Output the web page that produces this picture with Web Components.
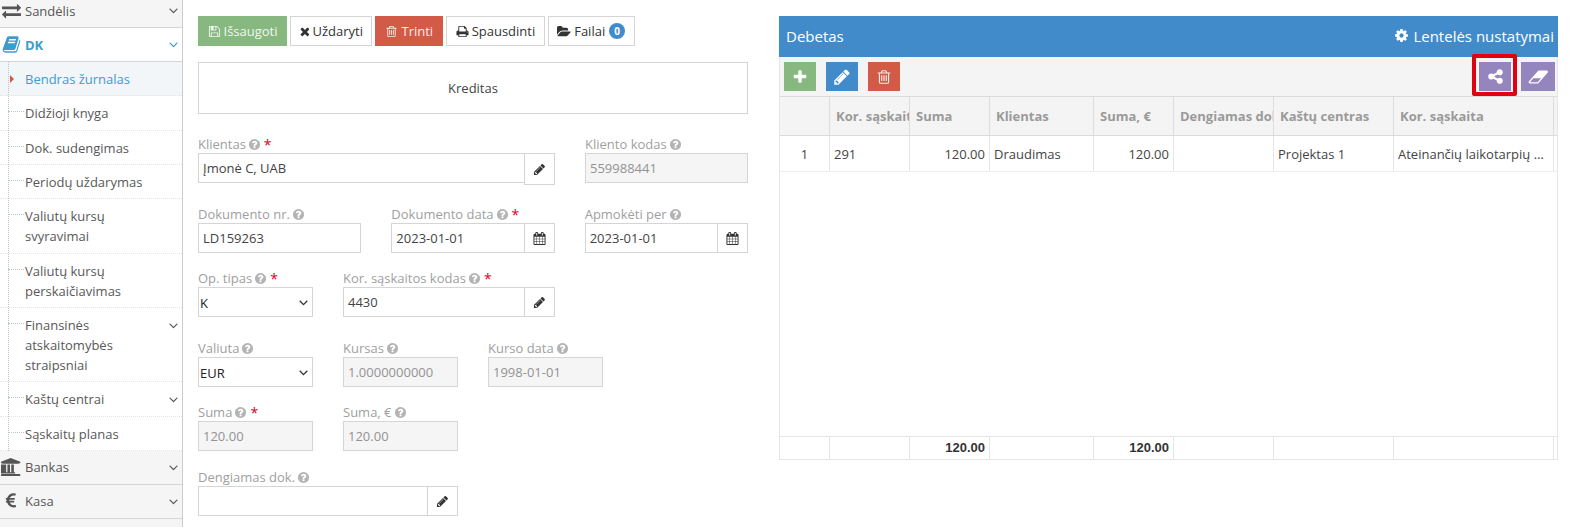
<!DOCTYPE html>
<html lang="lt">
<head>
<meta charset="utf-8">
<title>Bendras žurnalas</title>
<style>
  html, body { margin: 0; height: 527px; overflow: hidden; background: #fff; }
  body { font: 13px/20px "Open Sans", sans-serif; color: #444; }
</style>
</head>
<body>
<app-shell>
  <side-nav slot="nav">
    <nav-group icon="exchange" label="Sandėlis"></nav-group>
    <nav-group icon="book" label="DK" open></nav-group>
    <nav-sub>
      <nav-item active>Bendras žurnalas</nav-item>
      <nav-item>Didžioji knyga</nav-item>
      <nav-item>Dok. sudengimas</nav-item>
      <nav-item>Periodų uždarymas</nav-item>
      <nav-item>Valiutų kursų svyravimai</nav-item>
      <nav-item>Valiutų kursų perskaičiavimas</nav-item>
      <nav-item chevron>Finansinės atskaitomybės straipsniai</nav-item>
      <nav-item chevron>Kaštų centrai</nav-item>
      <nav-item>Sąskaitų planas</nav-item>
    </nav-sub>
    <nav-group icon="bank" label="Bankas"></nav-group>
    <nav-group icon="eur" label="Kasa"></nav-group>
    <nav-group></nav-group>
  </side-nav>

  <doc-form slot="form">
    <action-bar>
      <action-btn kind="success" icon="save">Išsaugoti</action-btn>
      <action-btn icon="times">Uždaryti</action-btn>
      <action-btn kind="danger" icon="trash">Trinti</action-btn>
      <action-btn icon="print">Spausdinti</action-btn>
      <action-btn icon="folder" badge="0">Failai</action-btn>
    </action-bar>
    <side-title>Kreditas</side-title>
    <form-row style="margin-top:21px">
      <form-field style="width:357px" label="Klientas" required value="Įmonė C, UAB" addon="pencil" tall></form-field>
      <form-field style="width:163px" label="Kliento kodas" value="559988441" readonly></form-field>
    </form-row>
    <form-row style="margin-top:22px">
      <form-field style="width:163.33px" label="Dokumento nr." value="LD159263"></form-field>
      <form-field style="width:163.33px" label="Dokumento data" required value="2023-01-01" addon="calendar"></form-field>
      <form-field style="width:163.33px" label="Apmokėti per" value="2023-01-01" addon="calendar"></form-field>
    </form-row>
    <form-row style="margin-top:16px">
      <form-field style="width:115px" label="Op. tipas" required options="K"></form-field>
      <form-field style="width:212px" label="Kor. sąskaitos kodas" required value="4430" addon="pencil"></form-field>
    </form-row>
    <form-row style="margin-top:22px">
      <form-field style="width:115px" label="Valiuta" options="EUR"></form-field>
      <form-field style="width:115px" label="Kursas" value="1.0000000000" readonly></form-field>
      <form-field style="width:115px" label="Kurso data" value="1998-01-01" readonly></form-field>
    </form-row>
    <form-row style="margin-top:16px">
      <form-field style="width:115px" label="Suma" required value="120.00" readonly></form-field>
      <form-field style="width:115px" label="Suma, €" value="120.00" readonly></form-field>
    </form-row>
    <form-row style="margin-top:17px">
      <form-field style="width:260px" label="Dengiamas dok." value="" addon="pencil"></form-field>
    </form-row>
  </doc-form>

  <data-panel slot="panel" title="Debetas"></data-panel>
</app-shell>

<script>
const ICONS = {
  save: ['0 0 1792 1792', 'M512 1536h768v-384h-768v384zm896 0h128v-896q0-14-10-38.5t-20-34.5l-281-281q-10-10-34-20t-39-10v416q0 40-28 68t-68 28h-576q-40 0-68-28t-28-68v-416h-128v1280h128v-416q0-40 28-68t68-28h832q40 0 68 28t28 68v416zm-384-928v-320q0-13-9.5-22.5t-22.5-9.5h-192q-13 0-22.5 9.5t-9.5 22.5v320q0 13 9.5 22.5t22.5 9.5h192q13 0 22.5-9.5t9.5-22.5zm640 32v928q0 40-28 68t-68 28h-1344q-40 0-68-28t-28-68v-1344q0-40 28-68t68-28h928q40 0 88 20t76 48l280 280q28 28 48 76t20 88z'],
  times: ['216 0 1376 1792', 'M1490 1322q0 40-28 68l-136 136q-28 28-68 28t-68-28l-294-294-294 294q-28 28-68 28t-68-28l-136-136q-28-28-28-68t28-68l294-294-294-294q-28-28-28-68t28-68l136-136q28-28 68-28t68 28l294 294 294-294q28-28 68-28t68 28l136 136q28 28 28 68t-28 68l-294 294 294 294q28 28 28 68z'],
  trash: ['0 0 1792 1792', 'M704 736v576q0 14-9 23t-23 9h-64q-14 0-23-9t-9-23v-576q0-14 9-23t23-9h64q14 0 23 9t9 23zm256 0v576q0 14-9 23t-23 9h-64q-14 0-23-9t-9-23v-576q0-14 9-23t23-9h64q14 0 23 9t9 23zm256 0v576q0 14-9 23t-23 9h-64q-14 0-23-9t-9-23v-576q0-14 9-23t23-9h64q14 0 23 9t9 23zm128 724v-948h-896v948q0 22 7 40.5t14.5 27 10.5 8.5h832q3 0 10.5-8.5t14.5-27 7-40.5zm-672-1076h448l-48-117q-7-9-17-11h-317q-10 2-17 11zm928 32v64q0 14-9 23t-23 9h-96v948q0 83-47 143.5t-113 60.5h-832q-66 0-113-58.5t-47-141.5v-952h-96q-14 0-23-9t-9-23v-64q0-14 9-23t23-9h309l70-167q15-37 54-63t79-26h320q40 0 79 26t54 63l70 167h309q14 0 23 9t9 23z'],
  print: ['0 0 1792 1792', 'M448 1536h896v-256h-896v256zm0-640h896v-384h-160q-40 0-68-28t-28-68v-160h-640v640zm1152 64q0-26-19-45t-45-19-45 19-19 45 19 45 45 19 45-19 19-45zm128 0v416q0 13-9.5 22.5t-22.5 9.5h-224v160q0 40-28 68t-68 28h-960q-40 0-68-28t-28-68v-160h-224q-13 0-22.5-9.5t-9.5-22.5v-416q0-79 56.5-135.5t135.5-56.5h64v-544q0-40 28-68t68-28h672q40 0 88 20t76 48l152 152q28 28 48 76t20 88v256h64q79 0 135.5 56.5t56.5 135.5z'],
  folder: ['0 0 1920 1792', 'M1879 952q0 31-31 66l-336 396q-43 51-120.5 86.5t-143.5 35.5h-1088q-34 0-60.5-13t-26.5-43q0-31 31-66l336-396q43-51 120.5-86.5t143.5-35.5h1088q34 0 60.5 13t26.5 43zm-343-344v160h-832q-94 0-197 47.5t-164 119.5l-337 396-5 6q0-4-.5-12.5t-.5-12.5v-960q0-92 66-158t158-66h320q92 0 158 66t66 158v32h544q92 0 158 66t66 158z'],
  help: ['0 0 1792 1792', 'M1024 1376v-192q0-14-9-23t-23-9h-192q-14 0-23 9t-9 23v192q0 14 9 23t23 9h192q14 0 23-9t9-23zm256-672q0-88-55.5-163t-138.5-116-170-41q-243 0-371 213-15 24 8 42l132 100q7 6 19 6 16 0 25-12 53-68 86-92 34-24 86-24 48 0 85.5 26t37.5 59q0 38-20 61t-68 45q-63 28-115.5 86.5t-52.5 125.5v36q0 14 9 23t23 9h192q14 0 23-9t9-23q0-19 21.5-49.5t54.5-49.5q32-18 49-28.5t46-35 44.5-48 28-60.5 12.5-81zm384 192q0 209-103 385.5t-279.5 279.5-385.5 103-385.5-103-279.5-279.5-103-385.5 103-385.5 279.5-279.5 385.5-103 385.5 103 279.5 279.5 103 385.5z'],
  pencil: ['0 0 1792 1792', 'M491 1536l91-91-235-235-91 91v107h128v128h107zm523-928q0-22-22-22-10 0-17 7l-542 542q-7 7-7 17 0 22 22 22 10 0 17-7l542-542q7-7 7-17zm-54-192l416 416-832 832h-416v-416zm683 96q0 53-37 90l-166 166-416-416 166-165q36-38 90-38 53 0 91 38l235 234q37 39 37 91z'],
  calendar: ['0 0 1792 1792', 'M192 1664h288v-288h-288v288zm352 0h320v-288h-320v288zm-352-352h288v-320h-288v320zm352 0h320v-320h-320v320zm-352-384h288v-288h-288v288zm736 736h320v-288h-320v288zm-384-736h320v-288h-320v288zm768 736h288v-288h-288v288zm-384-352h320v-320h-320v320zm-352-864v-288q0-13-9.5-22.5t-22.5-9.5h-64q-13 0-22.5 9.5t-9.5 22.5v288q0 13 9.5 22.5t22.5 9.5h64q13 0 22.5-9.5t9.5-22.5zm736 864h288v-320h-288v320zm-384-384h320v-288h-320v288zm384 0h288v-288h-288v288zm32-480v-288q0-13-9.5-22.5t-22.5-9.5h-64q-13 0-22.5 9.5t-9.5 22.5v288q0 13 9.5 22.5t22.5 9.5h64q13 0 22.5-9.5t9.5-22.5zm384-64v1280q0 52-38 90t-90 38h-1408q-52 0-90-38t-38-90v-1280q0-52 38-90t90-38h128v-96q0-66 47-113t113-47h64q66 0 113 47t47 113v96h384v-96q0-66 47-113t113-47h64q66 0 113 47t47 113v96h128q52 0 90 38t38 90z'],
  plus: ['0 0 1792 1792', 'M1600 736v192q0 40-28 68t-68 28h-416v416q0 40-28 68t-68 28h-192q-40 0-68-28t-28-68v-416h-416q-40 0-68-28t-28-68v-192q0-40 28-68t68-28h416v-416q0-40 28-68t68-28h192q40 0 68 28t28 68v416h416q40 0 68 28t28 68z'],
  cog: ['0 0 1792 1792', 'M1152 896q0-106-75-181t-181-75-181 75-75 181 75 181 181 75 181-75 75-181zm512-109v222q0 12-8 23t-20 13l-185 28q-19 54-39 91 35 50 107 138 10 12 10 25t-9 23q-27 37-99 108t-94 71q-12 0-26-9l-138-108q-44 23-91 38-16 136-29 186-7 28-36 28h-222q-14 0-24.5-8.5t-11.5-21.5l-28-184q-49-16-90-37l-141 107q-10 9-25 9-14 0-25-11-126-114-165-168-7-10-7-23 0-12 8-23 15-21 51-66.5t54-70.5q-27-50-41-99l-183-27q-13-2-21-12.5t-8-23.5v-222q0-12 8-23t19-13l186-28q14-46 39-92-40-57-107-138-10-12-10-24 0-10 9-23 26-36 98.5-107.5t94.5-71.5q13 0 26 10l138 107q44-23 91-38 16-136 29-186 7-28 36-28h222q14 0 24.5 8.5t11.5 21.5l28 184q49 16 90 37l142-107q9-9 24-9 13 0 25 10 129 119 165 170 7 8 7 22 0 12-8 23-15 21-51 66.5t-54 70.5q26 50 41 98l183 28q13 2 21 12.5t8 23.5z'],
  share: ['0 0 1792 1792', 'M1344 1024q133 0 226.5 93.5t93.5 226.5-93.5 226.5-226.5 93.5-226.5-93.5-93.5-226.5q0-12 2-34l-360-180q-92 86-218 86-133 0-226.5-93.5t-93.5-226.5 93.5-226.5 226.5-93.5q126 0 218 86l360-180q-2-22-2-34 0-133 93.5-226.5t226.5-93.5 226.5 93.5 93.5 226.5-93.5 226.5-226.5 93.5q-126 0-218-86l-360 180q2 22 2 34t-2 34l360 180q92-86 218-86z'],
  eraser: ['0 0 2048 1792', 'M960 1408l336-384h-768l-336 384h768zm1013-1077q15 34 9.5 71.5t-30.5 65.5l-896 1024q-38 44-96 44h-768q-38 0-69.5-20.5t-47.5-54.5q-15-34-9.5-71.5t30.5-65.5l896-1024q38-44 96-44h768q38 0 70 20.5t47 54.5z'],
  exchange: ['0 0 1792 1792', 'M1792 1184v192q0 13-9.5 22.5t-22.5 9.5h-1376v192q0 13-9.5 22.5t-22.5 9.5q-12 0-24-10l-319-320q-9-9-9-22 0-14 9-23l320-320q9-9 23-9 13 0 22.5 9.5t9.5 22.5v192h1376q13 0 22.5 9.5t9.5 22.5zm0-544q0 14-9 23l-320 320q-9 9-23 9-13 0-22.5-9.5t-9.5-22.5v-192h-1376q-13 0-22.5-9.5t-9.5-22.5v-192q0-13 9.5-22.5t22.5-9.5h1376v-192q0-14 9-23t23-9q12 0 24 10l319 319q9 9 9 23z'],
  book: ['0 0 1792 1792', 'M1703 478q40 57 18 129l-275 906q-19 64-76.5 107.5t-122.5 43.5h-923q-77 0-148.5-53.5t-99.5-131.5q-24-67-2-127 0-4 3-27t4-37q1-8-3-21.5t-3-19.5q2-11 8-21t16.5-23.5 16.5-23.5q23-38 45-91.5t30-91.5q3-10 .5-30t-.5-28q3-11 17-28t17-23q21-36 42-92t25-90q1-9-2.5-32t.5-28q4-13 22-30.5t22-22.5q19-26 42.5-84.5t27.5-96.5q1-8-3-25.5t-2-26.5q2-8 9-18t18-23 17-21q8-12 16.5-30.5t15-35 16-36 19.5-32 26.5-23.5 36-11.5 47.5 5.5l-1 3q38-9 51-9h761q74 0 114 56t18 130l-274 906q-36 119-71.5 153.5t-128.5 34.5h-869q-27 0-38 15-11 16-1 43 24 70 144 70h923q29 0 56-15.5t35-41.5l300-987q7-22 5-57 38 15 59 43zm-1064 2q-4 13 2 22.5t20 9.5h608q13 0 25.5-9.5t16.5-22.5l21-64q4-13-2-22.5t-20-9.5h-608q-13 0-25.5 9.5t-16.5 22.5zm-83 256q-4 13 2 22.5t20 9.5h608q13 0 25.5-9.5t16.5-22.5l21-64q4-13-2-22.5t-20-9.5h-608q-13 0-25.5 9.5t-16.5 22.5z'],
  bank: ['0 0 1920 1792', 'M960 0l960 384v128h-128q0 26-20.5 45t-48.5 19h-1526q-28 0-48.5-19t-20.5-45h-128v-128zm-704 640h256v768h128v-768h256v768h128v-768h256v768h59q28 0 48.5 19t20.5 45v64h-1664v-64q0-26 20.5-45t48.5-19h59v-768zm1595 960q28 0 48.5 19t20.5 45v128h-1920v-128q0-26 20.5-45t48.5-19h1782z'],
  eur: ['0 0 1792 1792', 'M1360 1307l35 159q3 12-3 22.5t-17 14.5l-5 1q-4 2-10.5 3.5t-16 4.5-21.5 5-25.5 5-30 5-33.5 4.5-36.5 3-38.5 1q-234 0-409-130.5t-238-351.5h-95q-13 0-22.5-9.5t-9.5-22.5v-113q0-13 9.5-22.5t22.5-9.5h66q-2-57 1-105h-67q-14 0-23-9t-9-23v-114q0-14 9-23t23-9h98q67-210 243.5-338t400.5-128q102 0 194 23 11 3 20 15 6 11 3 24l-43 159q-3 13-14 19.5t-24 2.5l-4-1q-4-1-11.5-2.5l-17.5-3.5-22.5-3.5-26-3-29-2.5-29.5-1q-126 0-226 64t-150 176h468q16 0 25 12 10 12 7 26l-24 114q-5 26-32 26h-488q-3 37 0 105h459q15 0 25 12 9 12 6 27l-24 112q-2 11-11 18.5t-20 7.5h-387q48 117 149.5 185.5t228.5 68.5q18 0 36-1.5t33.5-3.5 29.5-4.5 24.5-5 18.5-4.5l12-3 5-2q13-5 26 2 12 7 15 21z'],
  angle: ['0 0 1792 1792', 'M1395 736q0 13-10 23l-466 466q-10 10-23 10t-23-10l-466-466q-10-10-10-23t10-23l50-50q10-10 23-10t23 10l393 393 393-393q10-10 23-10t23 10l50 50q10 10 10 23z']
};

function svgIcon(name, size) {
  const [box, d] = ICONS[name];
  const [, , w] = box.split(' ').map(Number);
  return `<svg width="${(size * w / 1792).toFixed(2)}" height="${size}" viewBox="${box}" fill="currentColor" aria-hidden="true" style="display:block;flex:none"><path d="${d}"/></svg>`;
}

class ElementBase extends HTMLElement {
  constructor() {
    super();
    this.attachShadow({ mode: 'open' });
  }
}

class AppShell extends ElementBase {
  connectedCallback() {
    this.shadowRoot.innerHTML = `
      <style>
        :host { display: flex; align-items: flex-start; height: 527px; overflow: hidden; }
        .nav { flex: 0 0 183px; margin-top: -6px; }
        .form { flex: 0 0 550px; margin: 16px 0 0 15px; }
        .panel { flex: 0 0 779px; margin: 16px 0 0 31px; }
      </style>
      <div class="nav"><slot name="nav"></slot></div>
      <div class="form"><slot name="form"></slot></div>
      <div class="panel"><slot name="panel"></slot></div>`;
  }
}

class SideNav extends ElementBase {
  connectedCallback() {
    this.shadowRoot.innerHTML = `
      <style>
        :host { display: block; box-sizing: border-box; width: 183px; height: 540px; border-right: 1px solid #ccc; }
      </style>
      <slot></slot>`;
  }
}

// top level row of the menu (grey, with icon)
class NavGroup extends ElementBase {
  connectedCallback() {
    const icon = this.getAttribute('icon');
    const label = this.getAttribute('label') || '';
    const open = this.hasAttribute('open');
    const sizes = { exchange: 19, book: 19, bank: 18, eur: 18 };
    this.shadowRoot.innerHTML = `
      <style>
        :host {
          display: flex; align-items: center; box-sizing: border-box; height: 34px;
          background: ${open ? '#fff' : '#f5f5f5'}; border-bottom: 1px solid #d5d5d5;
          color: ${open ? '#3d9ccc' : '#555'}; font-weight: ${open ? 700 : 400};
        }
        .ico { flex: 0 0 20px; margin-left: 1px; display: flex; justify-content: center; }
        .label { flex: 1; margin-left: 4px; }
        .chev { flex: none; margin-right: 1px; color: ${open ? '#3d9ccc' : '#555'}; }
      </style>
      ${icon ? `<span class="ico">${svgIcon(icon, sizes[icon])}</span>` : ''}
      ${label ? `<span class="label">${label}</span><span class="chev">${svgIcon('angle', 15)}</span>` : ''}`;
  }
}

class NavSub extends ElementBase {
  connectedCallback() {
    this.shadowRoot.innerHTML = `
      <style>
        :host { display: block; position: relative; }
        :host::before { content: ""; position: absolute; left: 8px; top: 0; bottom: 0; border-left: 1px dotted #b9c6d2; z-index: 1; }
      </style>
      <slot></slot>`;
  }
}

class NavItem extends ElementBase {
  connectedCallback() {
    const active = this.hasAttribute('active');
    this.shadowRoot.innerHTML = `
      <style>
        :host {
          display: flex; position: relative; box-sizing: border-box;
          padding: 7px 1px 6.34px 25px; border-bottom: 1px dotted #e4e4e4;
          background: ${active ? '#f2f6f9' : '#fff'}; color: ${active ? '#3d9ccc' : '#585858'};
        }
        .text { flex: 1; min-width: 0; padding-right: 10px; }
        .chev { flex: none; color: #555; margin-top: 3px; }
        .tick { position: absolute; left: 8px; width: 16px; top: 15px; border-top: 1px dotted #b9c6d2; }
        .arrow { position: absolute; left: 10px; top: 13px; border: 4px solid transparent; border-left: 4px solid #d15b47; border-right: 0; }
      </style>
      ${active ? '<span class="arrow"></span>' : '<span class="tick"></span>'}
      <span class="text"><slot></slot></span>
      ${this.hasAttribute('chevron') ? `<span class="chev">${svgIcon('angle', 15)}</span>` : ''}`;
  }
}

class DocForm extends ElementBase {
  connectedCallback() {
    this.shadowRoot.innerHTML = `<style>:host { display: block; }</style><slot></slot>`;
  }
}

class ActionBar extends ElementBase {
  connectedCallback() {
    this.shadowRoot.innerHTML = `<style>:host { display: flex; gap: 3px; }</style><slot></slot>`;
  }
}

class ActionBtn extends ElementBase {
  connectedCallback() {
    const kinds = {
      success: 'background:#87b87f;border-color:#87b87f;color:#f0f7ee;',
      danger: 'background:#d15b47;border-color:#d15b47;color:#fbeae7;padding:0 9px;'
    };
    const badge = this.getAttribute('badge');
    this.shadowRoot.innerHTML = `
      <style>
        :host {
          display: flex; align-items: center; gap: 3px; box-sizing: border-box; height: 30px;
          padding: 0 8.5px; border: 1px solid #d5d5d5; background: #fff; color: #333; cursor: pointer;
          ${kinds[this.getAttribute('kind')] || ''}
        }
        .badge {
          width: 16px; height: 16px; margin-left: 1px; border-radius: 50%; background: #428bca; color: #fff;
          font-size: 10px; font-weight: 700; line-height: 16px; text-align: center;
        }
      </style>
      ${svgIcon(this.getAttribute('icon'), 13)}
      <slot></slot>
      ${badge !== null ? `<span class="badge">${badge}</span>` : ''}`;
  }
}

class SideTitle extends ElementBase {
  connectedCallback() {
    this.shadowRoot.innerHTML = `
      <style>
        :host {
          display: flex; align-items: center; justify-content: center; box-sizing: border-box;
          height: 52px; margin-top: 16px; border: 1px solid #d5d5d5; color: #444;
        }
      </style>
      <slot></slot>`;
  }
}

class FormRow extends ElementBase {
  connectedCallback() {
    this.shadowRoot.innerHTML = `<style>:host { display: flex; gap: 30px; }</style><slot></slot>`;
  }
}

class FormField extends ElementBase {
  connectedCallback() {
    const label = this.getAttribute('label');
    const value = this.getAttribute('value') || '';
    const addon = this.getAttribute('addon');
    const options = this.getAttribute('options');
    const readonly = this.hasAttribute('readonly');
    const control = options
      ? `<select aria-label="${label}"><option>${options}</option></select>
         <svg class="arrow" width="9" height="6" viewBox="0 0 9 6" aria-hidden="true"><path d="M.7.8l3.8 3.8L8.3.8" fill="none" stroke="#333" stroke-width="1.3"/></svg>`
      : `<input aria-label="${label}" value="${value}" ${readonly ? 'readonly' : ''}>`;
    this.shadowRoot.innerHTML = `
      <style>
        :host { display: block; }
        .label { display: flex; align-items: center; gap: 2px; height: 18px; line-height: 18px; color: #a0a0a0; white-space: nowrap; }
        .help { color: #b4b4b4; }
        .req { color: #d9001b; font-size: 14px; margin-left: 1px; position: relative; top: 1px; }
        .ctrl { display: flex; position: relative; height: 30px; }
        input, select {
          flex: 1; min-width: 0; box-sizing: border-box; height: 30px; margin: 0;
          border: 1px solid #d5d5d5; border-radius: 0; outline: 0; background: #fff;
          font: 13px "Open Sans", sans-serif; color: #444;
        }
        input { padding: 0 4px; }
        select { appearance: none; padding: 1px 0 0 1px; color: #222; }
        input[readonly] { background: #f5f5f5; color: #939393; }
        .arrow { position: absolute; right: 5px; top: 13px; pointer-events: none; }
        .addon {
          flex: none; display: flex; align-items: center; justify-content: center; box-sizing: border-box;
          width: 31px; height: ${this.hasAttribute('tall') ? 32 : 30}px; margin-left: -1px; background: #fff;
          border: 1px solid #d5d5d5; color: #333;
        }
      </style>
      <div class="label">
        <span>${label}</span>
        <span class="help">${svgIcon('help', 13)}</span>
        ${this.hasAttribute('required') ? '<span class="req">*</span>' : ''}
      </div>
      <div class="ctrl">
        ${control}
        ${addon ? `<span class="addon">${svgIcon(addon, 13)}</span>` : ''}
      </div>`;
  }
}

class DataPanel extends ElementBase {
  constructor() {
    super();
    this.columns = ['', 'Kor. sąskaita', 'Suma', 'Klientas', 'Suma, €', 'Dengiamas dok.', 'Kaštų centras', 'Kor. sąskaita'];
    this.row = [['1', 'c'], ['291', ''], ['120.00', 'r'], ['Draudimas', ''], ['120.00', 'r'], ['', ''], ['Projektas 1', ''], ['Ateinančių laikotarpių sąnaudos', '']];
    this.totals = ['', '', '120.00', '', '120.00', '', '', ''];
  }

  connectedCallback() {
    this.shadowRoot.innerHTML = `
      <style>
        :host { display: flex; flex-direction: column; height: 444px; --cols: 50px 80px 80px 104px 80px 100px 120px 160px; }
        .head {
          flex: none; display: flex; justify-content: space-between; align-items: center; box-sizing: border-box;
          height: 41px; padding: 0 4px 2px 7px; background: #428bca; color: #fff; font-size: 15px;
        }
        .settings { display: flex; align-items: center; gap: 4px; }
        .body { flex: 1; display: flex; flex-direction: column; min-height: 0; border: solid #e6e6e6; border-width: 0 1px; }
        .tools { flex: none; display: flex; gap: 10px; box-sizing: border-box; height: 39px; padding: 5px 2px 0 4px; background: #f4f4f4; }
        .spacer { flex: 1; }
        .tool { position: relative; flex: none; display: flex; align-items: center; justify-content: center; width: 32px; height: 29px; color: #fff; }
        .tool.wide { width: 34px; }
        .mark { position: absolute; left: -7px; right: -6px; top: -8px; bottom: -5px; border: 4px solid #e0000f; border-radius: 2px; }
        .thead { flex: none; background: #f4f4f4; border: solid #dcdcdc; border-width: 1px 0; }
        .row { display: grid; grid-template-columns: var(--cols); }
        .cell { box-sizing: border-box; border-right: 1px solid #e6e6e6; white-space: nowrap; overflow: hidden; }
        .thead .cell { height: 38px; line-height: 38px; padding-left: 6px; font-weight: 700; color: #9a9a9a; border-right-color: #dcdcdc; text-overflow: clip; }
        .tbody .row { border-bottom: 1px solid #eee; }
        .tbody .cell { height: 35px; line-height: 35px; padding: 1px 4px 0 4px; color: #444; text-overflow: ellipsis; }
        .tbody .c { text-align: center; }
        .tbody .r { text-align: right; }
        .tbody { flex: 1; }
        .tfoot { flex: none; border: solid #e6e6e6; border-width: 1px 0; }
        .tfoot .cell { height: 22px; padding-right: 4px; text-align: right; font: 700 13px/22px "Liberation Sans", sans-serif; color: #333; }
      </style>
      <div class="head">
        <span>${this.getAttribute('title')}</span>
        <span class="settings">${svgIcon('cog', 15)}Lentelės nustatymai</span>
      </div>
      <div class="body">
        <div class="tools">
          <span class="tool" style="background:#87b87f">${svgIcon('plus', 16)}</span>
          <span class="tool" style="background:#428bca">${svgIcon('pencil', 18)}</span>
          <span class="tool" style="background:#d15b47;color:#fbeae7">${svgIcon('trash', 16)}</span>
          <span class="spacer"></span>
          <span class="tool" style="background:#9585bf"><span class="mark"></span>${svgIcon('share', 17)}</span>
          <span class="tool wide" style="background:#9585bf">${svgIcon('eraser', 18)}</span>
        </div>
        <div class="thead"><div class="row">${this.columns.map(c => `<div class="cell">${c}</div>`).join('')}</div></div>
        <div class="tbody"><div class="row">${this.row.map(([t, a]) => `<div class="cell ${a}">${t}</div>`).join('')}</div></div>
        <div class="tfoot"><div class="row">${this.totals.map(t => `<div class="cell">${t}</div>`).join('')}</div></div>
      </div>`;
  }
}

customElements.define('app-shell', AppShell);
customElements.define('side-nav', SideNav);
customElements.define('nav-group', NavGroup);
customElements.define('nav-sub', NavSub);
customElements.define('nav-item', NavItem);
customElements.define('doc-form', DocForm);
customElements.define('action-bar', ActionBar);
customElements.define('action-btn', ActionBtn);
customElements.define('side-title', SideTitle);
customElements.define('form-row', FormRow);
customElements.define('form-field', FormField);
customElements.define('data-panel', DataPanel);
</script>
</body>
</html>
